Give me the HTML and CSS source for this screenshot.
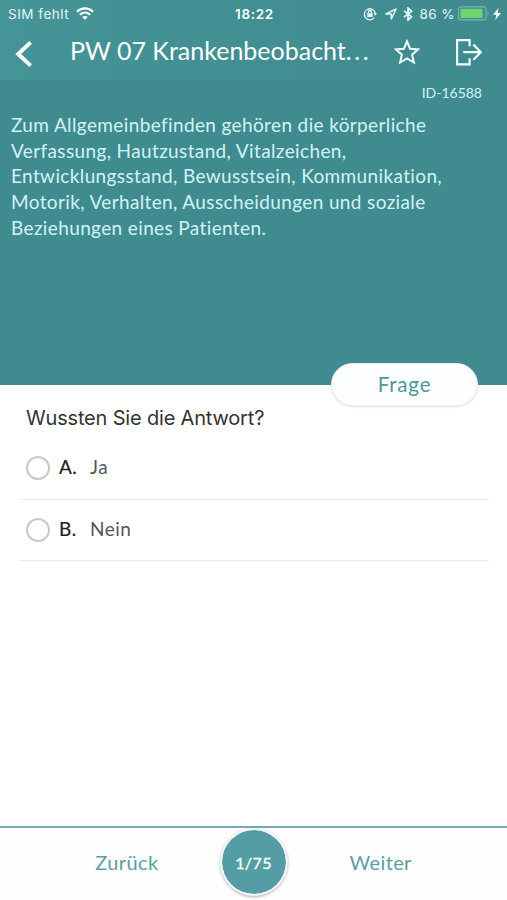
FILE: index.html
```html
<!DOCTYPE html>
<html lang="de">
<head>
    <meta charset="UTF-8">
    <meta name="viewport" content="width=device-width, initial-scale=1.0">
    <title>PW 07 Krankenbeobachtung</title>
    <link rel="stylesheet" href="styles.css">
</head>
<body>
    <div class="app">
        <header class="header">
            <div class="status-bar">
                <div class="status-left">
                    <span>SIM fehlt</span>
                    <svg class="wifi" width="18" height="13" viewBox="0 0 18 13" fill="none" stroke="#fff" stroke-width="2.2">
                        <path d="M1 4.8C5.6 .3 12.4 .3 17 4.8" />
                        <path d="M3.9 7.8c3-2.8 7.2-2.8 10.2 0" />
                        <path d="M6.2 10q2.8-2.2 5.6 0L9 12.8z" fill="#fff" stroke="none" />
                    </svg>
                </div>
                <div class="status-time">18:22</div>
                <div class="status-right">
                    <svg class="lock" width="14" height="14" viewBox="0 0 14 14" fill="none" stroke="#e2f8fa" stroke-width="1.3">
                        <path d="M11.2 10.7A5.5 5.5 0 1 1 12.3 6.4" />
                        <path d="M10.3 6.2h3.7l-1.8 2.6z" fill="#e2f8fa" stroke="none" />
                        <rect x="4.2" y="6.2" width="5.4" height="3.8" fill="#e2f8fa" stroke="none" />
                        <path d="M5.4 6.4V5a1.5 1.5 0 0 1 3 0v1.4" />
                    </svg>
                    <svg class="arrow" width="12" height="12" viewBox="0 0 12 12" fill="none" stroke="#e2f8fa" stroke-width="1.5" stroke-linejoin="round">
                        <path d="M.9 5.9L11 1 6.3 11V5.9z" />
                    </svg>
                    <svg class="bluetooth" width="10" height="14" viewBox="0 0 10 14" fill="none" stroke="#e2f8fa" stroke-width="1.7">
                        <path d="M1 3.8l7.6 6L5 13V1l3.6 3.2L1 10.2" />
                    </svg>
                    <span class="percent">86 %</span>
                    <svg class="battery" width="32" height="15" viewBox="0 0 32 15">
                        <rect x=".6" y=".9" width="27.4" height="13" rx="2.4" fill="none" stroke="#79b5b8" stroke-width="1.1" />
                        <rect x="2.5" y="2.7" width="22" height="9.4" rx=".8" fill="#6dd56c" />
                        <path d="M29.6 5q2 2.4 0 4.8z" fill="#79b5b8" />
                    </svg>
                    <svg class="bolt" width="8" height="12" viewBox="0 0 8 12" fill="#fff">
                        <path d="M5.5 0L0 6.8h3.3L2.2 12 8 5.1H4.6z" />
                    </svg>
                </div>
            </div>
            <div class="nav-bar">
                <svg class="back" width="18" height="28" viewBox="0 0 18 28" fill="none" stroke="#fff" stroke-width="4">
                    <path d="M15.6 2.4L3.2 14l12.4 11.6" />
                </svg>
                <h1 class="title">PW 07 Krankenbeobacht<span class="dots">...</span></h1>
                <svg class="star" width="26" height="26" viewBox="0 0 26 26" fill="none" stroke="#f2ffff" stroke-width="2">
                    <path d="M13 2.4l3.1 7.3 8 .7-6 5.3 1.8 7.8-6.9-4.1-6.9 4.1 1.8-7.8-6-5.3 8-.7z" />
                </svg>
                <svg class="exit" width="28" height="28" viewBox="0 0 28 28" fill="none" stroke="#f2ffff" stroke-width="2.2">
                    <path d="M14.6 8.2V2.1H2.1v24.2h12.5v-6.1" />
                    <path d="M8.2 14.2h17M18.4 6.6l7.3 7.6-7.3 7.6" />
                </svg>
            </div>
        </header>

        <section class="question">
            <div class="question-id">ID-16588</div>
            <p class="question-text">
                Zum Allgemeinbefinden gehören die körperliche<br>
                Verfassung, Hautzustand, Vitalzeichen,<br>
                Entwicklungsstand, Bewusstsein, Kommunikation,<br>
                Motorik, Verhalten, Ausscheidungen und soziale<br>
                Beziehungen eines Patienten.
            </p>
            <button class="flip-button">Frage</button>
        </section>

        <main class="answers">
            <h2>Wussten Sie die Antwort?</h2>
            <div class="answer">
                <span class="radio"></span>
                <span class="letter">A.</span>
                <span class="label">Ja</span>
            </div>
            <div class="answer">
                <span class="radio"></span>
                <span class="letter">B.</span>
                <span class="label">Nein</span>
            </div>
        </main>

        <footer class="footer">
            <a class="prev">Zurück</a>
            <div class="counter">1/75</div>
            <a class="next">Weiter</a>
        </footer>
    </div>
</body>
</html>
```
FILE: styles.css
```css
* {
    box-sizing: border-box;
}
body {
    margin: 0;
    font-family: "Lato", sans-serif;
    background: #fff;
    color: #333;
}
svg {
    display: block;
    flex: none;
}
.app {
    display: flex;
    flex-direction: column;
    height: 900px;
    width: 507px;
    overflow: hidden;
}
.header {
    height: 80px;
    background: linear-gradient(to right, #459497, #408b90 85%);
    color: #fff;
}
.status-bar {
    display: grid;
    grid-template-columns: 1fr auto 1fr;
    align-items: center;
    height: 27px;
    padding: 0 6px 0 8px;
    font-family: "Inter", sans-serif;
    font-size: 13.5px;
    white-space: nowrap;
}
.status-left,
.status-right {
    display: flex;
    align-items: center;
    color: #e2f8fa;
}
.status-left {
    letter-spacing: 0.5px;
}
.wifi {
    margin-left: 7px;
}
.status-time {
    font-weight: 600;
    letter-spacing: 0.7px;
}
.status-right {
    justify-content: flex-end;
}
.arrow {
    margin-left: 8px;
}
.bluetooth {
    margin-left: 6px;
}
.percent {
    margin-left: 7px;
    letter-spacing: 0.4px;
}
.battery {
    margin-left: 3px;
}
.bolt {
    margin-left: 3px;
}
.nav-bar {
    display: flex;
    align-items: center;
    height: 53px;
    padding: 0 23px 4px 15px;
}
.back {
    margin-top: 5px;
}
.title {
    width: 300px;
    margin: -3px 0 0 37px;
    font-size: 25px;
    font-weight: 400;
    line-height: 30px;
    white-space: nowrap;
}
.dots {
    letter-spacing: 2.6px;
}
.star {
    margin-left: 24px;
}
.exit {
    margin-left: 35px;
}
.question {
    display: flex;
    flex-direction: column;
    height: 305px;
    padding: 3px 29px 0 11px;
    background: #408b90;
    color: #d2f3f5;
}
.question-id {
    align-self: flex-end;
    margin-right: -4px;
    font-size: 14px;
    line-height: 20px;
}
.question-text {
    margin: 9px 0 0;
    font-size: 19px;
    line-height: 25.7px;
    letter-spacing: 0.37px;
    white-space: nowrap;
}
.flip-button {
    align-self: flex-end;
    flex: none;
    width: 147px;
    height: 43px;
    margin: auto 0 -21px;
    padding: 0 0 2px;
    border: 1px solid #e8eef3;
    border-radius: 22px;
    background: #fdfeff;
    box-shadow: 0 1px 2px rgba(60, 70, 110, 0.15);
    color: #50979a;
    font-family: inherit;
    font-size: 20.5px;
    letter-spacing: 0.8px;
}
.answers {
    flex: 1;
    padding: 20px 18px 0 20px;
}
.answers h2 {
    margin: 0 0 7px 6px;
    font-family: "Inter", sans-serif;
    font-size: 20px;
    font-weight: 400;
    line-height: 26px;
    letter-spacing: -0.18px;
}
.answer {
    display: flex;
    align-items: center;
    height: 61.5px;
    padding-left: 6px;
    border-bottom: 1px solid #ebebed;
    font-size: 19px;
}
.radio {
    width: 24px;
    height: 24px;
    border: 2px solid #c9c9c9;
    border-radius: 50%;
}
.letter {
    width: 31px;
    margin-left: 9px;
    padding-bottom: 3px;
    color: #222;
    letter-spacing: 0.5px;
    -webkit-text-stroke: 0.2px #222;
}
.label {
    padding-bottom: 3px;
    color: #555;
    letter-spacing: 0.5px;
}
.footer {
    display: grid;
    grid-template-columns: 1fr 68px 1fr;
    align-items: center;
    height: 74px;
    padding-bottom: 4px;
    border-top: 2px solid #76a9b9;
    background: #fefefe;
    color: #5b9fa2;
    font-size: 20px;
    letter-spacing: 0.4px;
}
.prev {
    justify-self: end;
    margin-right: 61px;
}
.next {
    margin-left: 62px;
}
.counter {
    display: flex;
    align-items: center;
    justify-content: center;
    width: 68px;
    height: 68px;
    border: 2px solid #f2f6f8;
    border-radius: 50%;
    background: #559da4;
    background-clip: padding-box;
    box-shadow: 0 1px 3px rgba(0, 0, 0, 0.3);
    color: #fff;
    font-size: 16px;
    -webkit-text-stroke: 0.3px #fff;
}
```
